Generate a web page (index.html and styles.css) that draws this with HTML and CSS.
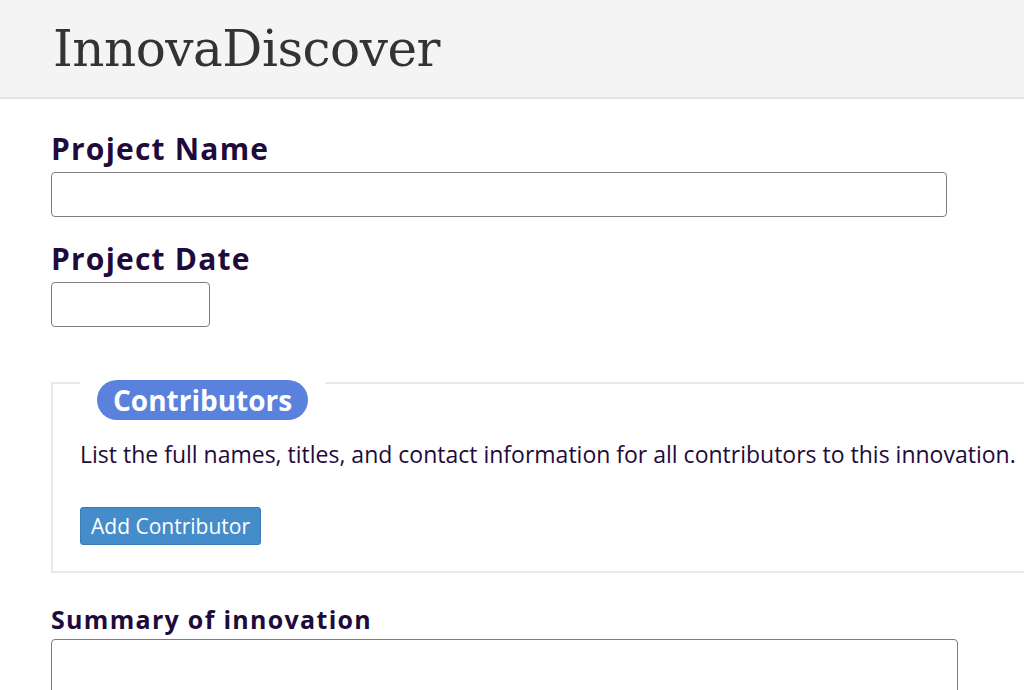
FILE: index.html
```html
<!DOCTYPE html>
<html lang="en">
<head>
    <meta charset="UTF-8">
    <meta name="viewport" content="width=device-width, initial-scale=1.0">
    <title>InnovaDiscover</title>
    <link rel="stylesheet" href="styles.css">
</head>
<body>

<header>
    <h1 class="brand">InnovaDiscover</h1>
</header>

<main class="container">
    <form class="project-form">
        <div class="field">
            <label for="project-name" class="label-lg">Project Name</label>
            <input type="text" id="project-name" class="input-wide">
        </div>
        <div class="field">
            <label for="project-date" class="label-lg">Project Date</label>
            <input type="text" id="project-date" class="input-short">
        </div>

        <fieldset class="group">
            <legend><span class="pill">Contributors</span></legend>
            <p>List the full names, titles, and contact information for all contributors to this innovation.</p>
            <button type="button" class="btn">Add Contributor</button>
        </fieldset>

        <div class="field">
            <label for="summary" class="label-md">Summary of innovation</label>
            <textarea id="summary"></textarea>
        </div>
    </form>
</main>

</body>
</html>
```

FILE: styles.css
```css
html {
    overflow-x: hidden;
}
body {
    font-family: "Open Sans", "Noto Sans", sans-serif;
    margin: 0;
    padding: 0;
    background: #fff;
    color: #1f0b3b;
}
header {
    background: #f4f4f4;
    border-bottom: 2px solid #e2e2e2;
    height: 97px;
    padding: 0 53px;
    display: flex;
    align-items: center;
}
.brand {
    margin: 0;
    font-family: "DejaVu Serif", serif;
    font-weight: normal;
    font-size: 50px;
    color: #333;
    letter-spacing: -0.5px;
}
.container {
    padding: 32px 0 0 51px;
}
.field {
    margin-bottom: 24px;
}
.field label {
    display: block;
    font-weight: 700;
    margin-bottom: 5px;
}
.label-lg {
    font-size: 30px;
    line-height: 36px;
    letter-spacing: 1.2px;
}
.label-md {
    font-size: 25px;
    line-height: 30px;
    letter-spacing: 1.3px;
}
input, textarea {
    box-sizing: border-box;
    height: 45px;
    border: 1px solid #7d7d7d;
    border-radius: 4px;
    font-size: 16px;
    padding: 6px 10px;
    display: block;
}
.input-wide {
    width: 896px;
}
.input-short {
    width: 159px;
}
textarea {
    width: 907px;
    height: 80px;
    resize: vertical;
}
.group {
    width: 1000px;
    margin: 53px 0 31px 0;
    border: 2px solid #e8e8e8;
    padding: 0 27px 26px 27px;
}
.group legend {
    padding: 0 17px;
}
.pill {
    display: block;
    background: #5a82dc;
    color: #fff;
    font-size: 28px;
    font-weight: 700;
    line-height: 40px;
    padding: 0 16px;
    border-radius: 20px;
    margin-bottom: -34px;
}
.group p {
    font-size: 23px;
    line-height: 32px;
    margin: 52px 0 37px 0;
}
.btn {
    display: block;
    background: #458ccb;
    color: #fff;
    border: 1px solid #3a7bb8;
    border-radius: 3px;
    font-family: "Open Sans", "Noto Sans", sans-serif;
    font-size: 21px;
    padding: 0 10px;
    height: 38px;
    cursor: pointer;
}
.btn:hover {
    background: #3a7bb8;
}
```
